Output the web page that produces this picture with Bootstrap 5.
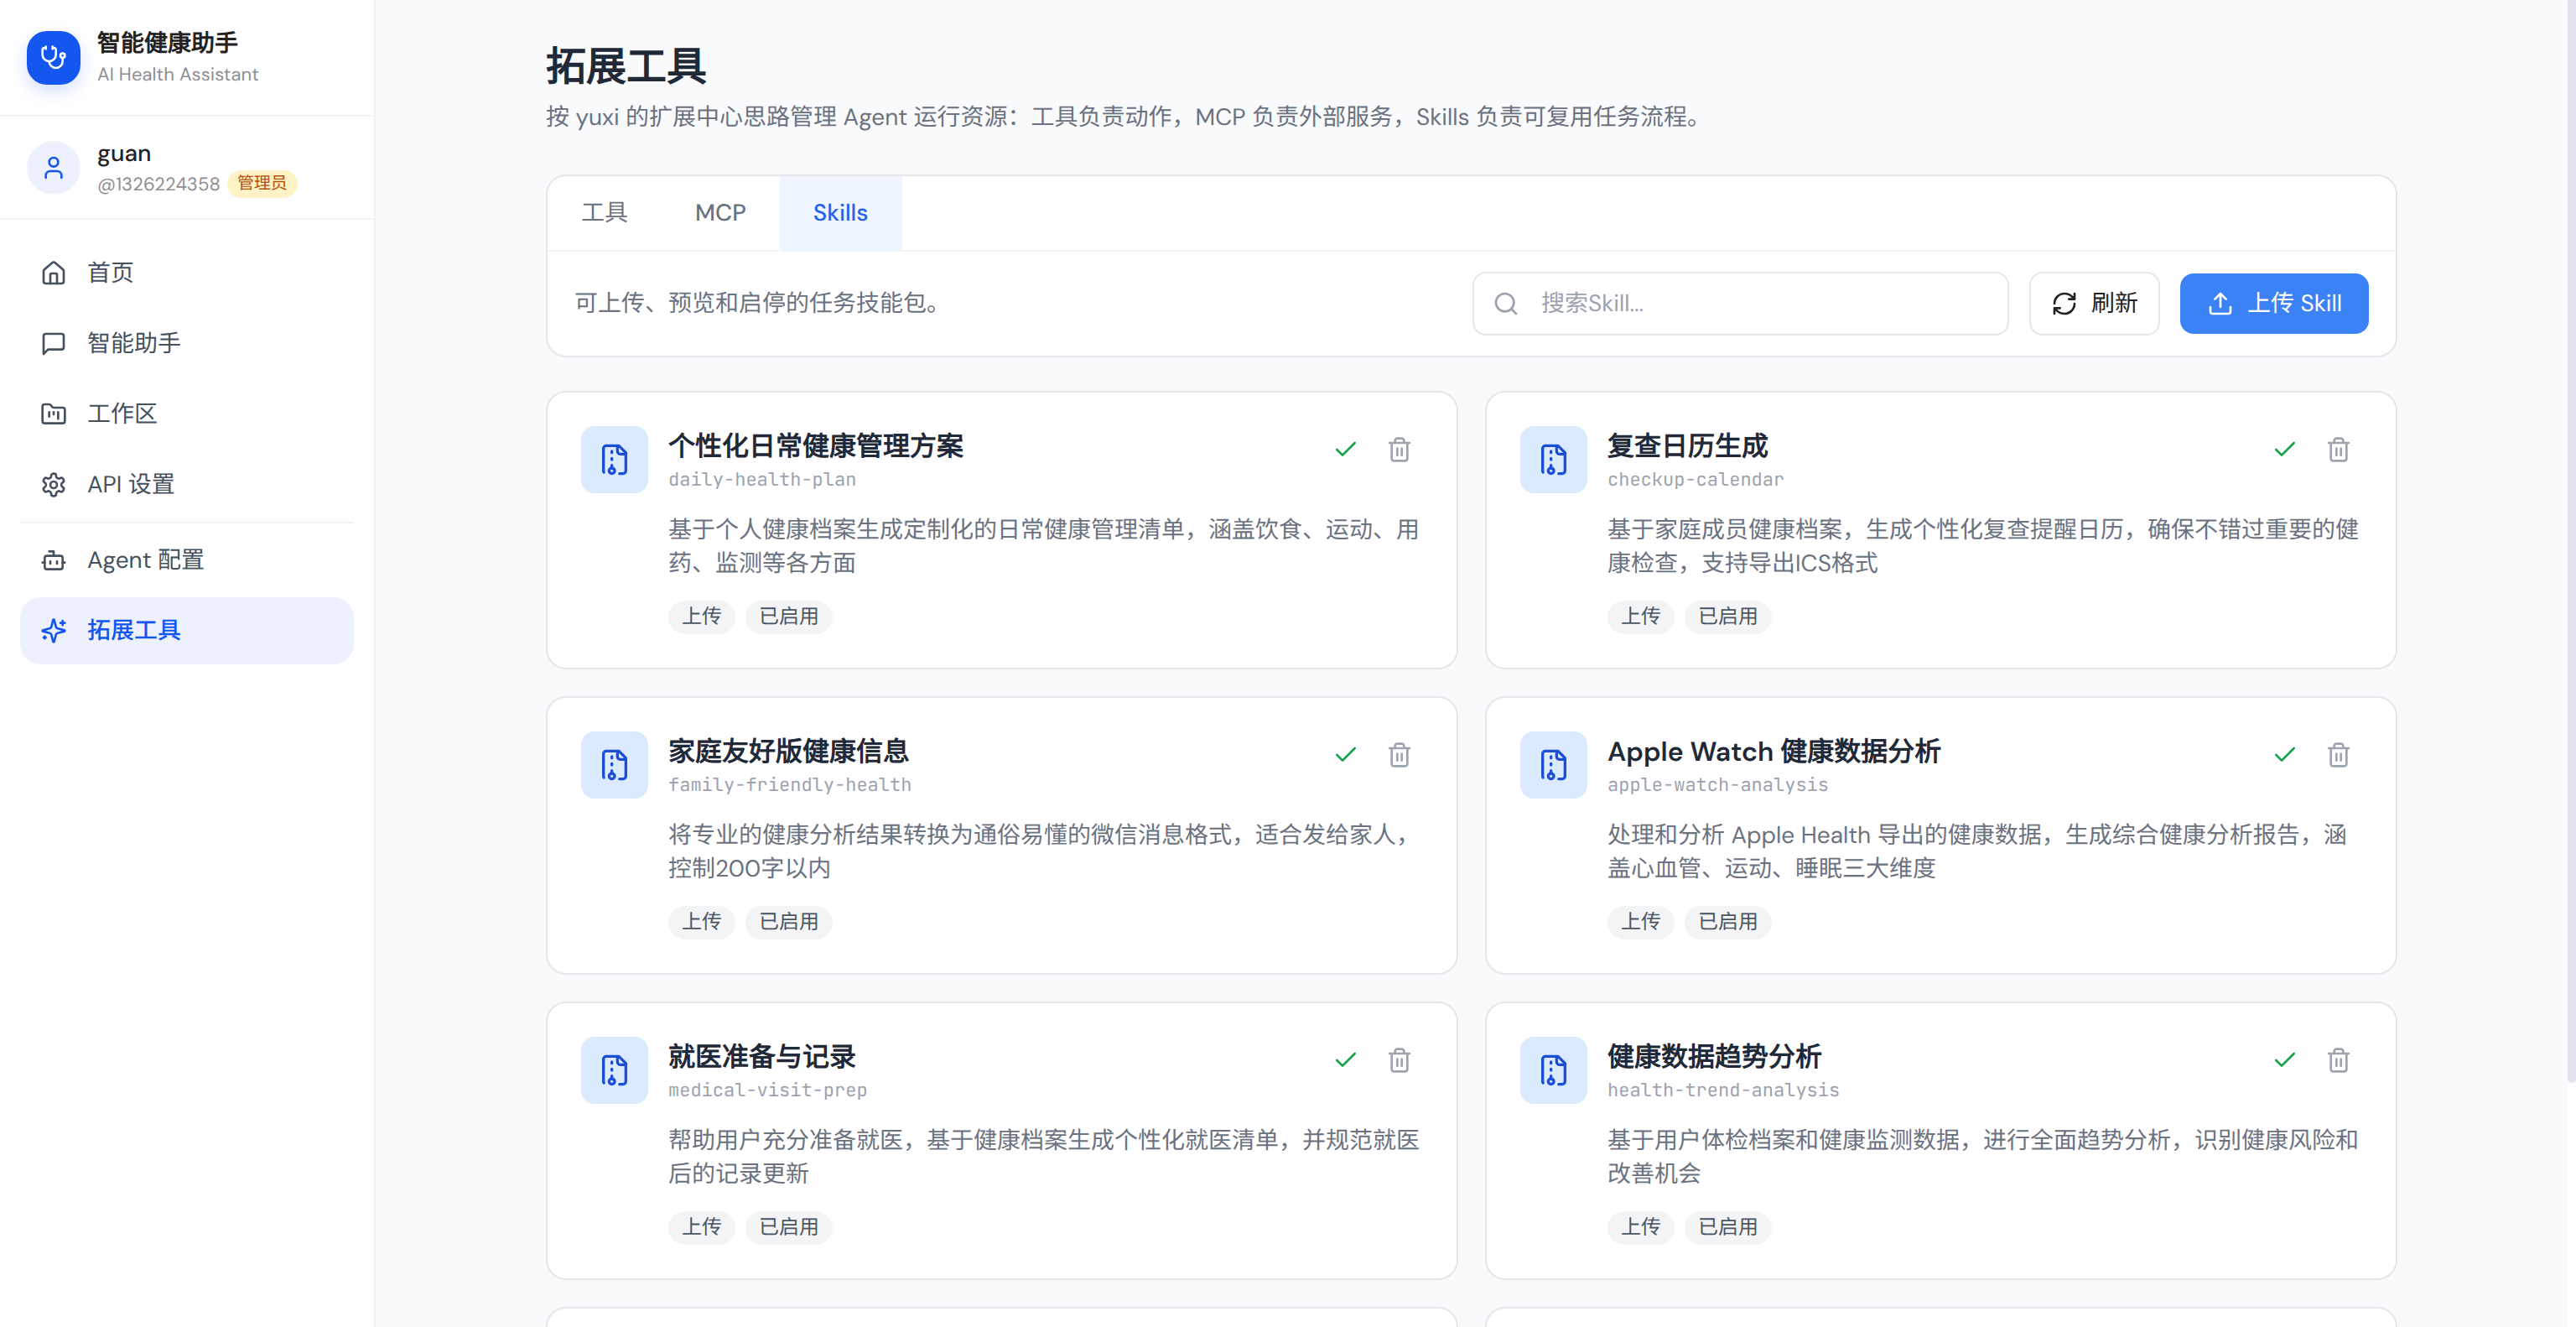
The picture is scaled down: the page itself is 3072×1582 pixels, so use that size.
<!DOCTYPE html>
<html lang="zh-CN">
<head>
<meta charset="utf-8">
<title>拓展工具</title>
<link rel="stylesheet" href="https://cdn.jsdelivr.net/npm/bootstrap@5.3.0/dist/css/bootstrap.min.css">
<style>
html, body { height: 100%; overflow: hidden; }
body { font-family: "DM Sans", sans-serif; font-size: 28px; line-height: 40px; color: #222; background: #f9fafc; text-rendering: geometricPrecision; }
.ic { width: 32px; height: 32px; flex: none; fill: none; stroke: currentColor; stroke-width: 2; stroke-linecap: round; stroke-linejoin: round; }
.side { width: 448px; border-right: 2px solid #f2f3f5; }
.side-head { height: 139px; border-bottom: 2px solid #f2f3f5; padding: 0 32px; gap: 20px; }
.side-user { height: 123px; border-bottom: 2px solid #f2f3f5; padding: 0 32px; gap: 20px; }
.logo-box { width: 64px; height: 64px; border-radius: 24px; background: #1456f0; box-shadow: 0 8px 20px rgba(20,86,240,.18); }
.avatar { width: 64px; height: 64px; background: #edf1fe; color: #1456f0; }
.sub { font-size: 22px; line-height: 33px; color: #8e8e93; letter-spacing: .08px; }
.role { font-size: 20px; line-height: 33px; padding: 0 12px; background: #fef3c7; color: #b45309; margin-left: 8px; letter-spacing: 0; }
.side-nav { padding: 24px 24px; gap: 4px; }
.side-link { height: 80px; padding: 0 24px; gap: 24px; border-radius: 24px; color: #45515e; text-decoration: none; }
.side-link.active { background: #edf1fe; color: #1456f0; font-family: "DM Sans", "Noto Sans CJK SC", sans-serif; font-weight: 500; }
.side-line { height: 2px; background: #f2f3f5; }
.page { width: 2208px; padding-top: 48px; }
.page h1 { font-size: 48px; line-height: 64px; font-weight: 700; color: #1f2937; margin-bottom: 8px; }
.lede { margin-bottom: 48px; }
.muted { color: #6b7280; }
.panel { background: #fff; border: 2px solid #e5e7eb; border-radius: 24px; }
.tabs { height: 90px; border-bottom: 2px solid #f3f4f6; }
.tab { padding: 0 40px; color: #6b7280; font-weight: 500; }
.tab.active { background: #eff6ff; color: #2563eb; }
.tools { padding: 24px 32px; gap: 24px; height: 124px; }
.search { width: 640px; height: 76px; border: 2px solid #e5e7eb; border-radius: 16px; padding: 0 22px; gap: 26px; color: #9ca3af; }
.b-line { height: 76px; border: 2px solid #e5e7eb; border-radius: 16px; padding: 0 24px; gap: 16px; }
.b-fill { height: 72px; border-radius: 16px; padding: 0 32px; gap: 16px; background: #3b82f6; color: #fff; }
.grid { display: grid; grid-template-columns: 1fr 1fr; gap: 32px; margin-top: 40px; }
.skill { height: 332px; padding: 40px; gap: 24px; }
.skill-ic { width: 80px; height: 80px; border-radius: 16px; background: #dbeafe; color: #1d4ed8; }
.skill-ic .ic { width: 40px; height: 40px; }
.skill h2 { font-size: 32px; line-height: 48px; font-weight: 600; color: #1f2937; }
.slug { font-family: "JetBrains Mono", "DejaVu Sans Mono", monospace; font-size: 22px; line-height: 32px; color: #9ca3af; }
.acts { gap: 8px; color: #9ca3af; }
.acts span { width: 56px; height: 56px; }
.acts .ok { color: #16a34a; }
.desc { margin: 24px 0; color: #6b7280; height: 80px; }
.tag-row { gap: 12px; }
.tagx { font-size: 24px; line-height: 40px; padding: 0 16px; background: #f3f4f6; color: #4b5563; }
.track { width: 10px; background: #fff; }
.thumb { height: 1291px; border-radius: 5px; background: #e4e2ee; box-shadow: 0 -5px 0 #e4e2ee; }
</style>
<script src="https://cdn.jsdelivr.net/npm/bootstrap@5.3.0/dist/js/bootstrap.bundle.min.js"></script>
</head>
<body>
<svg class="d-none" xmlns="http://www.w3.org/2000/svg">
<symbol id="i-steth" viewBox="0 0 24 24"><path d="M11 2v2M5 2v2M5 3H4a2 2 0 0 0-2 2v4a6 6 0 0 0 12 0V5a2 2 0 0 0-2-2h-1M8 15a6 6 0 0 0 12 0v-3"/><circle cx="20" cy="10" r="2"/></symbol>
<symbol id="i-user" viewBox="0 0 24 24"><path d="M19 21v-2a4 4 0 0 0-4-4H9a4 4 0 0 0-4 4v2"/><circle cx="12" cy="7" r="4"/></symbol>
<symbol id="i-home" viewBox="0 0 24 24"><path d="M15 21v-8a1 1 0 0 0-1-1h-4a1 1 0 0 0-1 1v8"/><path d="M3 10a2 2 0 0 1 .709-1.528l7-5.999a2 2 0 0 1 2.582 0l7 5.999A2 2 0 0 1 21 10v9a2 2 0 0 1-2 2H5a2 2 0 0 1-2-2z"/></symbol>
<symbol id="i-chat" viewBox="0 0 24 24"><path d="M21 15a2 2 0 0 1-2 2H7l-4 4V5a2 2 0 0 1 2-2h14a2 2 0 0 1 2 2z"/></symbol>
<symbol id="i-folder" viewBox="0 0 24 24"><path d="M4 20h16a2 2 0 0 0 2-2V8a2 2 0 0 0-2-2h-7.93a2 2 0 0 1-1.66-.9l-.82-1.2A2 2 0 0 0 7.93 3H4a2 2 0 0 0-2 2v13c0 1.1.9 2 2 2ZM8 10v4M12 10v2M16 10v6"/></symbol>
<symbol id="i-gear" viewBox="0 0 24 24"><path d="M12.22 2h-.44a2 2 0 0 0-2 2v.18a2 2 0 0 1-1 1.73l-.43.25a2 2 0 0 1-2 0l-.15-.08a2 2 0 0 0-2.73.73l-.22.38a2 2 0 0 0 .73 2.73l.15.1a2 2 0 0 1 1 1.72v.51a2 2 0 0 1-1 1.74l-.15.09a2 2 0 0 0-.73 2.73l.22.38a2 2 0 0 0 2.73.73l.15-.08a2 2 0 0 1 2 0l.43.25a2 2 0 0 1 1 1.73V20a2 2 0 0 0 2 2h.44a2 2 0 0 0 2-2v-.18a2 2 0 0 1 1-1.73l.43-.25a2 2 0 0 1 2 0l.15.08a2 2 0 0 0 2.73-.73l.22-.39a2 2 0 0 0-.73-2.73l-.15-.08a2 2 0 0 1-1-1.74v-.5a2 2 0 0 1 1-1.74l.15-.09a2 2 0 0 0 .73-2.73l-.22-.38a2 2 0 0 0-2.73-.73l-.15.08a2 2 0 0 1-2 0l-.43-.25a2 2 0 0 1-1-1.73V4a2 2 0 0 0-2-2z"/><circle cx="12" cy="12" r="3"/></symbol>
<symbol id="i-bot" viewBox="0 0 24 24"><path d="M12 8V4H8"/><rect x="4" y="8" width="16" height="12" rx="2"/><path d="M2 14h2M20 14h2M15 13v2M9 13v2"/></symbol>
<symbol id="i-spark" viewBox="0 0 24 24"><path d="M9.937 15.5A2 2 0 0 0 8.5 14.063l-6.135-1.582a.5.5 0 0 1 0-.962L8.5 9.936A2 2 0 0 0 9.937 8.5l1.582-6.135a.5.5 0 0 1 .963 0L14.063 8.5A2 2 0 0 0 15.5 9.937l6.135 1.581a.5.5 0 0 1 0 .964L15.5 14.063a2 2 0 0 0-1.437 1.437l-1.582 6.135a.5.5 0 0 1-.963 0zM20 3v4M22 5h-4M4 17v2M5 18H3"/></symbol>
<symbol id="i-search" viewBox="0 0 24 24"><circle cx="11" cy="11" r="8"/><path d="m21 21-4.3-4.3"/></symbol>
<symbol id="i-refresh" viewBox="0 0 24 24"><path d="M3 12a9 9 0 0 1 9-9 9.75 9.75 0 0 1 6.74 2.74L21 8M21 3v5h-5M21 12a9 9 0 0 1-9 9 9.75 9.75 0 0 1-6.74-2.74L3 16M8 16H3v5"/></symbol>
<symbol id="i-upload" viewBox="0 0 24 24"><path d="M12 3v12M17 8l-5-5-5 5M21 15v4a2 2 0 0 1-2 2H5a2 2 0 0 1-2-2v-4"/></symbol>
<symbol id="i-zip" viewBox="0 0 24 24"><path d="M10 12v-1M10 18v-2M10 7V6M14 2v4a2 2 0 0 0 2 2h4M15.5 22H18a2 2 0 0 0 2-2V7l-5-5H6a2 2 0 0 0-2 2v16a2 2 0 0 0 .274 1.01"/><circle cx="10" cy="20" r="2"/></symbol>
<symbol id="i-check" viewBox="0 0 24 24"><path d="M20 6 9 17l-5-5"/></symbol>
<symbol id="i-trash" viewBox="0 0 24 24"><path d="M3 6h18M19 6v14c0 1-1 2-2 2H7c-1 0-2-1-2-2V6M8 6V4c0-1 1-2 2-2h4c1 0 2 1 2 2v2M10 11v6M14 11v6"/></symbol>
</svg>
<div class="d-flex vh-100 overflow-hidden">
  <aside class="side bg-white d-flex flex-column flex-shrink-0">
    <div class="side-head d-flex align-items-center">
      <div class="logo-box d-flex align-items-center justify-content-center text-white"><svg class="ic"><use href="#i-steth"/></svg></div>
      <div><div class="brand fw-bold">智能健康助手</div><div class="sub">AI Health Assistant</div></div>
    </div>
    <div class="side-user d-flex align-items-center">
      <div class="avatar rounded-circle d-flex align-items-center justify-content-center"><svg class="ic"><use href="#i-user"/></svg></div>
      <div><div class="uname fw-medium">guan</div><div class="sub d-flex align-items-center"><span>@1326224358</span><span class="role rounded-pill">管理员</span></div></div>
    </div>
    <nav class="side-nav d-flex flex-column">
      <a class="side-link d-flex align-items-center"><svg class="ic"><use href="#i-home"/></svg><span>首页</span></a>
      <a class="side-link d-flex align-items-center"><svg class="ic"><use href="#i-chat"/></svg><span>智能助手</span></a>
      <a class="side-link d-flex align-items-center"><svg class="ic"><use href="#i-folder"/></svg><span>工作区</span></a>
      <a class="side-link d-flex align-items-center"><svg class="ic"><use href="#i-gear"/></svg><span>API 设置</span></a>
      <div class="side-line"></div>
      <a class="side-link d-flex align-items-center"><svg class="ic"><use href="#i-bot"/></svg><span>Agent 配置</span></a>
      <a class="side-link active d-flex align-items-center"><svg class="ic"><use href="#i-spark"/></svg><span>拓展工具</span></a>
    </nav>
  </aside>
  <main class="flex-grow-1">
    <div class="page mx-auto">
      <h1>拓展工具</h1>
      <p class="lede muted">按 yuxi 的扩展中心思路管理 Agent 运行资源：工具负责动作，MCP 负责外部服务，Skills 负责可复用任务流程。</p>
      <section class="panel overflow-hidden">
        <div class="tabs d-flex">
          <div class="tab d-flex align-items-center">工具</div>
          <div class="tab d-flex align-items-center">MCP</div>
          <div class="tab active d-flex align-items-center">Skills</div>
        </div>
        <div class="tools d-flex align-items-center">
          <span class="muted me-auto">可上传、预览和启停的任务技能包。</span>
          <div class="search d-flex align-items-center"><svg class="ic"><use href="#i-search"/></svg><span>搜索Skill...</span></div>
          <div class="b-line d-flex align-items-center"><svg class="ic"><use href="#i-refresh"/></svg><span>刷新</span></div>
          <div class="b-fill d-flex align-items-center"><svg class="ic"><use href="#i-upload"/></svg><span>上传 Skill</span></div>
        </div>
      </section>
      <section class="grid">
        <article class="panel skill d-flex">
          <div class="skill-ic d-flex align-items-center justify-content-center flex-shrink-0"><svg class="ic"><use href="#i-zip"/></svg></div>
          <div class="flex-grow-1">
            <div class="d-flex justify-content-between">
              <div><h2 class="mb-0">个性化日常健康管理方案</h2><div class="slug">daily-health-plan</div></div>
              <div class="acts d-flex"><span class="ok d-flex align-items-center justify-content-center"><svg class="ic"><use href="#i-check"/></svg></span><span class="d-flex align-items-center justify-content-center"><svg class="ic"><use href="#i-trash"/></svg></span></div>
            </div>
            <p class="desc">基于个人健康档案生成定制化的日常健康管理清单，涵盖饮食、运动、用药、监测等各方面</p>
            <div class="tag-row d-flex"><span class="tagx rounded-pill">上传</span><span class="tagx rounded-pill">已启用</span></div>
          </div>
        </article>
        <article class="panel skill d-flex">
          <div class="skill-ic d-flex align-items-center justify-content-center flex-shrink-0"><svg class="ic"><use href="#i-zip"/></svg></div>
          <div class="flex-grow-1">
            <div class="d-flex justify-content-between">
              <div><h2 class="mb-0">复查日历生成</h2><div class="slug">checkup-calendar</div></div>
              <div class="acts d-flex"><span class="ok d-flex align-items-center justify-content-center"><svg class="ic"><use href="#i-check"/></svg></span><span class="d-flex align-items-center justify-content-center"><svg class="ic"><use href="#i-trash"/></svg></span></div>
            </div>
            <p class="desc">基于家庭成员健康档案，生成个性化复查提醒日历，确保不错过重要的健康检查，支持导出ICS格式</p>
            <div class="tag-row d-flex"><span class="tagx rounded-pill">上传</span><span class="tagx rounded-pill">已启用</span></div>
          </div>
        </article>
        <article class="panel skill d-flex">
          <div class="skill-ic d-flex align-items-center justify-content-center flex-shrink-0"><svg class="ic"><use href="#i-zip"/></svg></div>
          <div class="flex-grow-1">
            <div class="d-flex justify-content-between">
              <div><h2 class="mb-0">家庭友好版健康信息</h2><div class="slug">family-friendly-health</div></div>
              <div class="acts d-flex"><span class="ok d-flex align-items-center justify-content-center"><svg class="ic"><use href="#i-check"/></svg></span><span class="d-flex align-items-center justify-content-center"><svg class="ic"><use href="#i-trash"/></svg></span></div>
            </div>
            <p class="desc">将专业的健康分析结果转换为通俗易懂的微信消息格式，适合发给家人，控制200字以内</p>
            <div class="tag-row d-flex"><span class="tagx rounded-pill">上传</span><span class="tagx rounded-pill">已启用</span></div>
          </div>
        </article>
        <article class="panel skill d-flex">
          <div class="skill-ic d-flex align-items-center justify-content-center flex-shrink-0"><svg class="ic"><use href="#i-zip"/></svg></div>
          <div class="flex-grow-1">
            <div class="d-flex justify-content-between">
              <div><h2 class="mb-0">Apple Watch 健康数据分析</h2><div class="slug">apple-watch-analysis</div></div>
              <div class="acts d-flex"><span class="ok d-flex align-items-center justify-content-center"><svg class="ic"><use href="#i-check"/></svg></span><span class="d-flex align-items-center justify-content-center"><svg class="ic"><use href="#i-trash"/></svg></span></div>
            </div>
            <p class="desc">处理和分析 Apple Health 导出的健康数据，生成综合健康分析报告，涵盖心血管、运动、睡眠三大维度</p>
            <div class="tag-row d-flex"><span class="tagx rounded-pill">上传</span><span class="tagx rounded-pill">已启用</span></div>
          </div>
        </article>
        <article class="panel skill d-flex">
          <div class="skill-ic d-flex align-items-center justify-content-center flex-shrink-0"><svg class="ic"><use href="#i-zip"/></svg></div>
          <div class="flex-grow-1">
            <div class="d-flex justify-content-between">
              <div><h2 class="mb-0">就医准备与记录</h2><div class="slug">medical-visit-prep</div></div>
              <div class="acts d-flex"><span class="ok d-flex align-items-center justify-content-center"><svg class="ic"><use href="#i-check"/></svg></span><span class="d-flex align-items-center justify-content-center"><svg class="ic"><use href="#i-trash"/></svg></span></div>
            </div>
            <p class="desc">帮助用户充分准备就医，基于健康档案生成个性化就医清单，并规范就医后的记录更新</p>
            <div class="tag-row d-flex"><span class="tagx rounded-pill">上传</span><span class="tagx rounded-pill">已启用</span></div>
          </div>
        </article>
        <article class="panel skill d-flex">
          <div class="skill-ic d-flex align-items-center justify-content-center flex-shrink-0"><svg class="ic"><use href="#i-zip"/></svg></div>
          <div class="flex-grow-1">
            <div class="d-flex justify-content-between">
              <div><h2 class="mb-0">健康数据趋势分析</h2><div class="slug">health-trend-analysis</div></div>
              <div class="acts d-flex"><span class="ok d-flex align-items-center justify-content-center"><svg class="ic"><use href="#i-check"/></svg></span><span class="d-flex align-items-center justify-content-center"><svg class="ic"><use href="#i-trash"/></svg></span></div>
            </div>
            <p class="desc">基于用户体检档案和健康监测数据，进行全面趋势分析，识别健康风险和改善机会</p>
            <div class="tag-row d-flex"><span class="tagx rounded-pill">上传</span><span class="tagx rounded-pill">已启用</span></div>
          </div>
        </article>
        <article class="panel skill"></article>
        <article class="panel skill"></article>
      </section>
    </div>
  </main>
  <div class="track flex-shrink-0"><div class="thumb"></div></div>
</div>
</body>
</html>
